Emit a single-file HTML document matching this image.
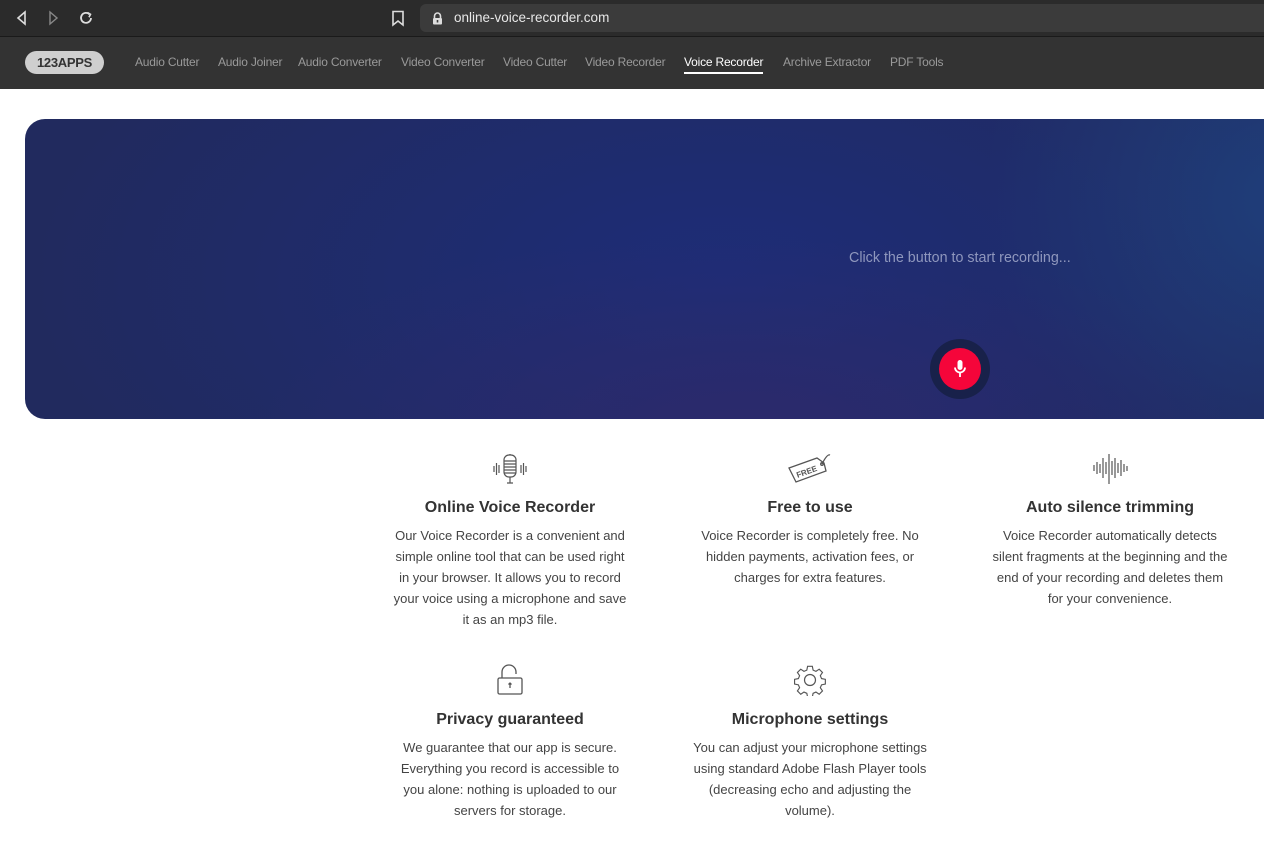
<!DOCTYPE html>
<html><head><meta charset="utf-8">
<style>
*{margin:0;padding:0;box-sizing:border-box}
body{width:1264px;height:842px;overflow:hidden;background:#fff;font-family:"Liberation Sans",sans-serif;position:relative}
.chrome{position:absolute;left:0;top:0;width:1264px;height:37px;background:#2b2b2b;border-bottom:1px solid #1a1a1a}
.url{position:absolute;left:420px;top:4px;width:860px;height:28px;background:#3b3b3b;border-radius:6px;color:#e8e8e8;font-size:13.5px;line-height:28px;padding-left:34px}
.nav{position:absolute;left:0;top:37px;width:1264px;height:52px;background:#333}
.logo{position:absolute;left:25px;top:14px;width:79px;height:23px;border-radius:12px;background:#cfcfcf;color:#333;font-weight:bold;font-size:13px;line-height:23px;text-align:center;letter-spacing:-0.3px}
.nl{position:absolute;top:18px;font-size:12px;color:#9a9a9a;white-space:nowrap;letter-spacing:-0.2px}
.nl.act{color:#fff}
.nl.act:after{content:"";position:absolute;left:0;right:0;top:17px;height:2px;background:#fff}
.hero{position:absolute;left:25px;top:119px;width:1270px;height:300px;border-radius:20px;
background:radial-gradient(ellipse 500px 200px at 720px 310px,#2c2a6c 0%,rgba(44,42,108,0) 100%),radial-gradient(ellipse 300px 300px at 1260px 80px,#1f3e7a 0%,rgba(31,62,122,0) 100%),radial-gradient(ellipse 700px 350px at 700px 160px,#1d2d78 0%,#212a5e 100%)}
.hint{position:absolute;left:849px;top:250px;color:#8f97bd;font-size:14.3px}
.btn{position:absolute;left:930px;top:339px;width:60px;height:60px;border-radius:50%;background:#18214a}
.btn div{position:absolute;left:9px;top:9px;width:42px;height:42px;border-radius:50%;background:#f5053a}
.f{position:absolute;width:300px;text-align:center;color:#444}
.f h3{font-size:16px;font-weight:bold;color:#333;height:26px;line-height:26px}
.f p{font-size:13px;line-height:21px;color:#444;margin-top:4px}
.f svg{display:block;margin:0 auto}
</style></head><body>
<div class="chrome">
<svg style="position:absolute;left:14px;top:10px" width="16" height="16" viewBox="0 0 16 16" fill="none" stroke="#ddd" stroke-width="1.6"><path d="M11 2 L4 8 L11 14 Z"/></svg>
<svg style="position:absolute;left:46px;top:10px" width="16" height="16" viewBox="0 0 16 16" fill="none" stroke="#888" stroke-width="1.4"><path d="M4 2 L11 8 L4 14 Z"/></svg>
<svg style="position:absolute;left:78px;top:10px" width="16" height="16" viewBox="0 0 16 16" fill="none" stroke="#ddd" stroke-width="1.8"><path d="M13 8 A5 5 0 1 1 11.5 4.3"/><path d="M9.5 2.5 L12.5 4.3 L11 7.2" stroke-width="1.6"/></svg>
<svg style="position:absolute;left:391px;top:10px" width="14" height="17" viewBox="0 0 14 17" fill="none" stroke="#ddd" stroke-width="1.6"><path d="M2 1.5 H12 V15 L7 11 L2 15 Z"/></svg>
<div class="url"><svg style="position:absolute;left:12px;top:8px" width="11" height="13" viewBox="0 0 11 13"><path d="M2.5 6 V4 A3 3 0 0 1 8.5 4 V6" fill="none" stroke="#ddd" stroke-width="1.6"/><rect x="1" y="6" width="9" height="6.5" rx="1" fill="#ddd"/><rect x="4.7" y="8" width="1.6" height="2.5" fill="#3b3b3b"/></svg>online-voice-recorder.com</div>
</div>
<div class="nav">
<div class="logo">123APPS</div>
<span class="nl" style="left:135px">Audio Cutter</span>
<span class="nl" style="left:218px">Audio Joiner</span>
<span class="nl" style="left:298px">Audio Converter</span>
<span class="nl" style="left:401px">Video Converter</span>
<span class="nl" style="left:503px">Video Cutter</span>
<span class="nl" style="left:585px">Video Recorder</span>
<span class="nl act" style="left:684px">Voice Recorder</span>
<span class="nl" style="left:783px">Archive Extractor</span>
<span class="nl" style="left:890px">PDF Tools</span>
</div>
<div class="hero"></div>
<div class="hint">Click the button to start recording...</div>
<div class="btn"><div><svg style="position:absolute;left:13px;top:11px" width="16" height="20" viewBox="0 0 16 20" fill="none" stroke="#fff" stroke-width="1.8"><rect x="5.5" y="1" width="5" height="10" rx="2.5" fill="#fff" stroke="none"/><path d="M3 8.5 A5 5 0 0 0 13 8.5"/><path d="M8 13.5 V18"/></svg></div></div>

<div class="f" style="left:360px;top:452px">
<svg width="36" height="34" viewBox="0 0 36 34" fill="none" stroke="#555" stroke-width="1.2"><rect x="12" y="3" width="12" height="22" rx="5"/><path d="M12 9h12M12 12h12M12 15h12M12 18h12M12 21h12M18 3v-1M18 25v6M15 31h6"/><path d="M2 14v6M4.5 11v12M7 13v8M29 13v8M31.5 11v12M34 14v6"/></svg>
<h3 style="margin-top:9px">Online Voice Recorder</h3>
<p>Our Voice Recorder is a convenient and<br>simple online tool that can be used right<br>in your browser. It allows you to record<br>your voice using a microphone and save<br>it as an mp3 file.</p>
</div>
<div class="f" style="left:660px;top:452px">
<svg width="50" height="34" viewBox="0 0 50 34" fill="none" stroke="#555" stroke-width="1.3"><path d="M4 16 L32 6 L39 11 L41 19 L11 30 Z"/><circle cx="37" cy="12" r="1.3"/><path d="M37 12 C40 6 43 2 45 3"/><text x="11" y="23" transform="rotate(-20 20 20)" font-family="Liberation Sans" font-weight="bold" font-size="8" fill="#555" stroke="none">FREE</text></svg>
<h3 style="margin-top:9px">Free to use</h3>
<p>Voice Recorder is completely free. No<br>hidden payments, activation fees, or<br>charges for extra features.</p>
</div>
<div class="f" style="left:960px;top:452px">
<svg width="36" height="34" viewBox="0 0 36 34" fill="none" stroke="#555" stroke-width="1.2"><path d="M2 13v6M5 10v12M8 12v9M11 6v20M14 10v12M17 2v30M20 9v14M23 6v20M26 11v10M29 8v16M32 12v8M35 14v5"/></svg>
<h3 style="margin-top:9px">Auto silence trimming</h3>
<p>Voice Recorder automatically detects<br>silent fragments at the beginning and the<br>end of your recording and deletes them<br>for your convenience.</p>
</div>
<div class="f" style="left:360px;top:664px">
<svg width="30" height="32" viewBox="0 0 30 32" fill="none" stroke="#555" stroke-width="1.3"><path d="M7 14 V8 A7 7 0 0 1 21 8 V10"/><rect x="3" y="14" width="24" height="16" rx="1.5"/><path d="M15 19v5M13.5 20.5 L15 19 L16.5 20.5"/></svg>
<h3 style="margin-top:11px">Privacy guaranteed</h3>
<p>We guarantee that our app is secure.<br>Everything you record is accessible to<br>you alone: nothing is uploaded to our<br>servers for storage.</p>
</div>
<div class="f" style="left:660px;top:664px">
<svg width="32" height="32" viewBox="0 0 32 32" fill="none" stroke="#555" stroke-width="1.2"><path d="M13.5 2h5l.8 4 3 1.3 3.4-2.3 3.5 3.5-2.3 3.4 1.3 3 4 .8v5l-4 .8-1.3 3 2.3 3.4-3.5 3.5-3.4-2.3-3 1.3-.8 4h-5l-.8-4-3-1.3-3.4 2.3-3.5-3.5 2.3-3.4-1.3-3-4-.8v-5l4-.8 1.3-3-2.3-3.4 3.5-3.5 3.4 2.3 3-1.3z" transform="translate(0 -1) scale(0.95) translate(0.8 1.5)"/><circle cx="16" cy="16" r="5.5"/></svg>
<h3 style="margin-top:11px">Microphone settings</h3>
<p>You can adjust your microphone settings<br>using standard Adobe Flash Player tools<br>(decreasing echo and adjusting the<br>volume).</p>
</div>
</body></html>
